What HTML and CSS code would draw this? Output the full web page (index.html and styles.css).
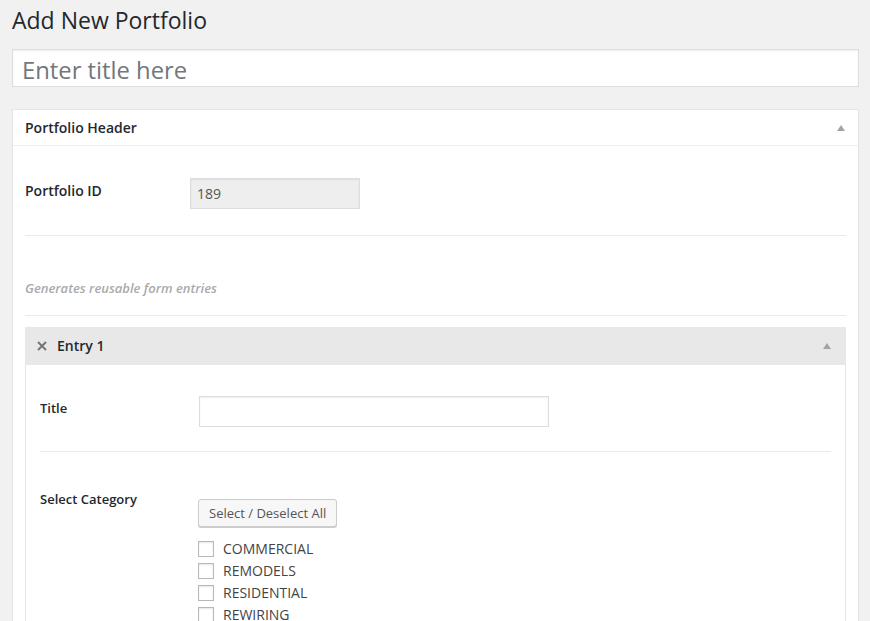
FILE: index.html
```html
<!DOCTYPE html>
<html lang="en">
<head>
<meta charset="utf-8">
<title>Add New Portfolio</title>
<link rel="stylesheet" href="styles.css">
</head>
<body>
<div class="wrap">
  <h1 class="page-title">Add New Portfolio</h1>
  <input class="title-input" type="text" placeholder="Enter title here">

  <div class="postbox">
    <div class="postbox-header">
      <span class="postbox-title">Portfolio Header</span>
      <span class="toggle-arrow"></span>
    </div>
    <div class="inside">
      <div class="cmb-row row-id">
        <div class="cmb-th"><label class="label-lg">Portfolio ID</label></div>
        <div class="cmb-td"><input class="id-input" type="text" value="189" readonly></div>
      </div>
      <div class="cmb-row row-desc">
        <p class="group-desc">Generates reusable form entries</p>
      </div>

      <div class="group">
        <div class="group-header">
          <svg class="remove-icon" width="10" height="10" viewBox="0 0 10 10" aria-hidden="true">
            <path d="M1 1 L9 9 M9 1 L1 9" stroke="#72777c" stroke-width="2" fill="none"/>
          </svg>
          <span class="group-title">Entry 1</span>
          <span class="toggle-arrow"></span>
        </div>
        <div class="group-body">
          <div class="cmb-row row-title">
            <div class="cmb-th small"><label class="label-sm">Title</label></div>
            <div class="cmb-td"><input class="text-input" type="text"></div>
          </div>
          <div class="cmb-row row-cat">
            <div class="cmb-th small"><label class="label-sm">Select Category</label></div>
            <div class="cmb-td cat-field">
              <button class="button" type="button">Select / Deselect All</button>
              <ul class="check-list">
                <li><input type="checkbox" class="check"><span>COMMERCIAL</span></li>
                <li><input type="checkbox" class="check"><span>REMODELS</span></li>
                <li><input type="checkbox" class="check"><span>RESIDENTIAL</span></li>
                <li><input type="checkbox" class="check"><span>REWIRING</span></li>
              </ul>
            </div>
          </div>
        </div>
      </div>
    </div>
  </div>
</div>
</body>
</html>
```

FILE: styles.css
```css
html, body {
  margin: 0;
  padding: 0;
  background: #f1f1f1;
}
body {
  font-family: "Open Sans", "Liberation Sans", sans-serif;
  font-size: 13px;
  color: #444;
}
.wrap {
  padding: 6px 11px 40px 12px;
}
.page-title {
  margin: 0 0 14px;
  font-size: 23px;
  line-height: 29px;
  font-weight: 400;
  color: #23282d;
}
.title-input {
  display: block;
  width: 100%;
  height: 38px;
  box-sizing: border-box;
  margin: 0;
  padding: 4px 9px 0;
  border: 1px solid #ddd;
  background: #fff;
  box-shadow: inset 0 1px 2px rgba(0,0,0,.07);
  font-family: "Open Sans", sans-serif;
  font-size: 23.8px;
  color: #32373c;
  outline: none;
}
.title-input::placeholder {
  color: #72777c;
}
.postbox {
  margin-top: 22px;
  background: #fff;
  border: 1px solid #e5e5e5;
  box-shadow: 0 1px 1px rgba(0,0,0,.04);
}
.postbox-header {
  display: flex;
  align-items: center;
  height: 35px;
  padding: 0 13px 0 12px;
  border-bottom: 1px solid #eee;
}
.postbox-title {
  flex: 1;
  font-size: 14px;
  line-height: 1.4;
  font-weight: 600;
  color: #23282d;
}
.toggle-arrow {
  width: 0;
  height: 0;
  border-left: 4px solid transparent;
  border-right: 4px solid transparent;
  border-bottom: 6px solid #a0a5aa;
}
.inside {
  padding: 0 12px 12px;
}
.cmb-row {
  display: flex;
  border-bottom: 1px solid #e9e9e9;
}
.cmb-th {
  width: 165px;
  flex: none;
}
.cmb-th.small {
  width: 158px;
}
.label-lg {
  display: block;
  margin-top: 3px;
  font-size: 14px;
  line-height: 1.4;
  font-weight: 600;
  color: #23282d;
}
.label-sm {
  display: block;
  font-size: 13px;
  line-height: 1.4;
  font-weight: 600;
  color: #23282d;
}
.row-id {
  padding: 32px 0 26px;
}
.id-input {
  display: block;
  width: 170px;
  height: 31px;
  box-sizing: border-box;
  margin: 0;
  padding: 0 6px;
  border: 1px solid #ddd;
  background: #eee;
  box-shadow: inset 0 1px 2px rgba(0,0,0,.07);
  font-family: "Open Sans", sans-serif;
  font-size: 14px;
  color: #555;
  outline: none;
}
.row-desc {
  padding: 43px 0 18px;
}
.group-desc {
  margin: 0;
  font-size: 13px;
  line-height: 18px;
  font-style: italic;
  font-weight: 600;
  color: #aaa;
}
.group {
  margin-top: 11px;
  border: 1px solid #e5e5e5;
  border-top: 0;
}
.group-header {
  display: flex;
  align-items: center;
  height: 38px;
  margin: 0 -1px;
  padding: 0 15px 0 12px;
  background: #e8e8e8;
}
.remove-icon {
  display: block;
  flex: none;
  margin-right: 10px;
}
.group-title {
  flex: 1;
  font-size: 14px;
  line-height: 1.4;
  font-weight: 600;
  color: #23282d;
}
.group-body {
  padding: 0 14px;
}
.row-title {
  padding: 31px 0 24px;
}
.row-title .label-sm {
  margin-top: 3px;
}
.text-input {
  display: block;
  width: 350px;
  height: 31px;
  box-sizing: border-box;
  margin: 0 0 0 1px;
  padding: 0 6px;
  border: 1px solid #ddd;
  background: #fff;
  box-shadow: inset 0 1px 2px rgba(0,0,0,.07);
  font-family: "Open Sans", sans-serif;
  font-size: 14px;
  outline: none;
}
.row-cat {
  padding: 38px 0 24px;
  border-bottom: 0;
}
.cat-field {
  padding-top: 9px;
}
.button {
  display: block;
  height: 28px;
  margin: 0;
  padding: 0 10px 1px;
  border: 1px solid #ccc;
  border-radius: 3px;
  background: #f7f7f7;
  box-shadow: 0 1px 0 #ccc;
  font-family: "Open Sans", sans-serif;
  font-size: 13px;
  line-height: 26px;
  color: #555;
}
.check-list {
  list-style: none;
  margin: 11px 0 0;
  padding: 0;
}
.check-list li {
  display: flex;
  align-items: center;
  height: 22px;
  font-size: 14px;
  line-height: 22px;
  color: #444;
}
.check {
  -webkit-appearance: none;
  appearance: none;
  flex: none;
  width: 16px;
  height: 16px;
  margin: 0 9px 0 0;
  border: 1px solid #b4b9be;
  background: #fff;
  box-shadow: inset 0 1px 2px rgba(0,0,0,.1);
}
```
